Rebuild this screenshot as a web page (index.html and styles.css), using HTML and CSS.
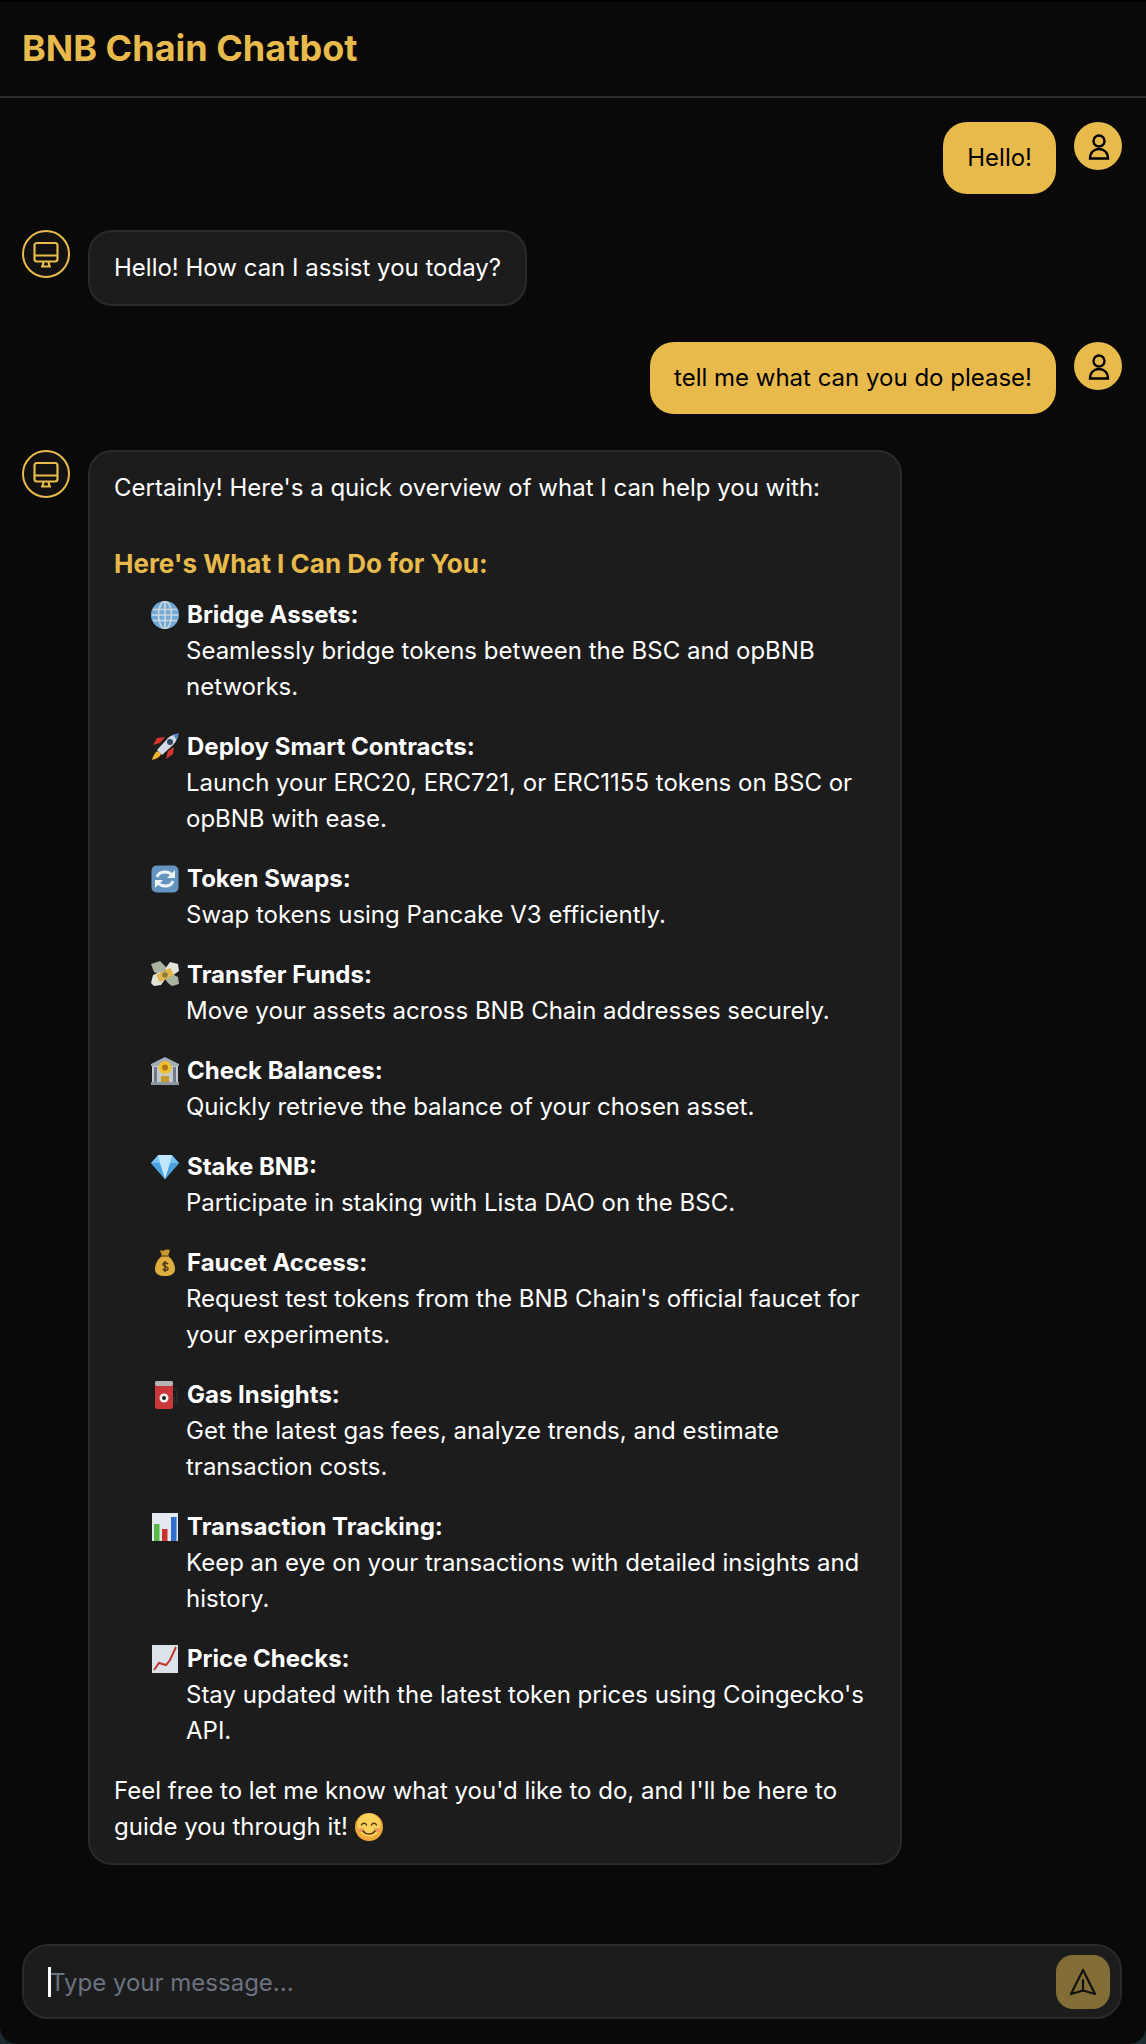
FILE: index.html
```html
<!DOCTYPE html>
<html lang="en">
<head>
  <meta charset="UTF-8" />
  <title>BNB Chain Chatbot</title>
  <link rel="stylesheet" href="styles.css">
</head>
<body>
  <div class="app">
    <header class="topbar">
      <h1>BNB Chain Chatbot</h1>
    </header>

    <main class="messages">
      <div class="msg msg-user">
        <div class="bubble bubble-user">Hello!</div>
        <div class="avatar avatar-user">
          <svg viewBox="0 0 48 48" width="48" height="48"><circle cx="25" cy="19" r="5.500"/><path d="M16 36.500c0-6 4-9.500 9-9.500s9 3.500 9 9.500z"/></svg>
        </div>
      </div>

      <div class="msg">
        <div class="avatar avatar-bot">
          <svg viewBox="0 0 44 44" width="44" height="44"><rect x="10.500" y="11" width="23" height="18.500" rx="2.500"/><path d="M10.500 23.500h23M19.500 29.500l-.8 4.500M24.500 29.500l.8 4.500M17 34.500h10"/></svg>
        </div>
        <div class="bubble bubble-bot">Hello! How can I assist you today?</div>
      </div>

      <div class="msg msg-user">
        <div class="bubble bubble-user">tell me what can you do please!</div>
        <div class="avatar avatar-user">
          <svg viewBox="0 0 48 48" width="48" height="48"><circle cx="25" cy="19" r="5.500"/><path d="M16 36.500c0-6 4-9.500 9-9.500s9 3.500 9 9.500z"/></svg>
        </div>
      </div>

      <div class="msg">
        <div class="avatar avatar-bot">
          <svg viewBox="0 0 44 44" width="44" height="44"><rect x="10.500" y="11" width="23" height="18.500" rx="2.500"/><path d="M10.500 23.500h23M19.500 29.500l-.8 4.500M24.500 29.500l.8 4.500M17 34.500h10"/></svg>
        </div>
        <div class="bubble bubble-bot bubble-long">
          <p class="intro">Certainly! Here's a quick overview of what I can help you with:</p>
          <h3>Here's What I Can Do for You:</h3>
          <ul class="features">
            <li>
              <svg class="emoji" viewBox="0 0 28 28"><circle cx="14" cy="14" r="14" fill="#6fa9d6"/><g fill="none" stroke="#cfd8dc" stroke-width="1.600"><ellipse cx="14" cy="14" rx="6.500" ry="13.500"/><path d="M14 1v26M2 8.500h24M2 19.500h24M1 14h26"/></g></svg><strong>Bridge Assets:</strong><br>
              Seamlessly bridge tokens between the BSC and opBNB networks.
            </li>
            <li>
              <svg class="emoji" viewBox="0 0 28 28"><path d="M9 10 2 12l4-7 8-1zM17 18l-2 8 7-5 1-7z" fill="#d9352b"/><path d="M7 18c-3 1-5 5-6 9 4-1 8-3 9-6z" fill="#f5b32e"/><path d="M6 17 17 5c3-2.500 7-4 10.500-4.500C27 4 25 9 22 12L11 22z" fill="#d3dce6"/><path d="M22 1.500C24 1 26 .8 27.500.5c-.3 2-1 4.500-2 6.500z" fill="#4a86c5"/><circle cx="19" cy="9" r="3" fill="#33465c"/></svg><strong>Deploy Smart Contracts:</strong><br>
              Launch your ERC20, ERC721, or ERC1155 tokens on BSC or opBNB with ease.
            </li>
            <li>
              <svg class="emoji" viewBox="0 0 28 28"><rect x=".5" y=".5" width="27" height="27" rx="5" fill="#6494c0"/><g fill="none" stroke="#f1f4f7" stroke-width="2.800"><path d="M6 12c1-3.500 4-5 8-5 3 0 5 1 6.500 2.500"/><path d="M22 16c-1 3.500-4 5-8 5-3 0-5-1-6.500-2.500"/></g><path d="M24 5v8h-8zM4 23v-8h8z" fill="#f1f4f7"/></svg><strong>Token Swaps:</strong><br>
              Swap tokens using Pancake V3 efficiently.
            </li>
            <li>
              <svg class="emoji" viewBox="0 0 28 28"><path d="M0 3l9-3 7 7-6 7-7-3zM14 18l5-6 8 4 1 7-7 2-4-3z" fill="#a9b39f"/><path d="M0 22l2-8 7-3 6 6-5 7-7 1zM14 8l5-7 8 2 1 7-7 5z" fill="#dfe3d8"/><rect x="6" y="10" width="16" height="8" rx="1" transform="rotate(-28 14 14)" fill="#e2b84d"/><circle cx="14" cy="14" r="2.800" fill="#8a7a3b"/></svg><strong>Transfer Funds:</strong><br>
              Move your assets across BNB Chain addresses securely.
            </li>
            <li>
              <svg class="emoji" viewBox="0 0 28 28"><path d="M14 0 28 7v2H0V7z" fill="#a3adb5"/><rect x="1" y="9" width="26" height="16" fill="#c3cbd1"/><g fill="#6f7b85"><rect x="3" y="10" width="3" height="15"/><rect x="22" y="10" width="3" height="15"/></g><rect x="10" y="19" width="8" height="6" fill="#c49a2d"/><rect x="0" y="25" width="28" height="3" fill="#8f99a1"/><circle cx="14" cy="10.500" r="6.500" fill="#f2bf2f"/><circle cx="14" cy="10.500" r="3" fill="#a8761a"/></svg><strong>Check Balances:</strong><br>
              Quickly retrieve the balance of your chosen asset.
            </li>
            <li>
              <svg class="emoji" viewBox="0 0 28 28"><path d="M7 2h14l7 8-14 16L0 10z" fill="#74c3f2"/><path d="M0 10h28L14 26z" fill="#4aa3e0"/><path d="M9 10h10l-5 16zM7 2l2 8h10l2-8z" fill="#bfe6fb"/></svg><strong>Stake BNB:</strong><br>
              Participate in staking with Lista DAO on the BSC.
            </li>
            <li>
              <svg class="emoji" viewBox="0 0 28 28"><path d="M9 1c2 1 3 1 5 0s4 0 5 0l-2 6h-6z" fill="#c9962f"/><path d="M11 7h6c4 3 7 8 7 13 0 5-4 7-10 7S4 25 4 20c0-5 3-10 7-13z" fill="#e0ae3f"/><rect x="10.500" y="6" width="7" height="2" fill="#8d6a1e"/><path d="M17 15c-1-1.500-5-2-5 .5 0 2.500 5 1.500 5 4s-4 2-5.500.5M14 12v11" fill="none" stroke="#4d3a14" stroke-width="1.500"/></svg><strong>Faucet Access:</strong><br>
              Request test tokens from the BNB Chain's official faucet for your experiments.
            </li>
            <li>
              <svg class="emoji" viewBox="0 0 28 28"><path d="M22 7c3 1 4 3 4 6v8c0 2-3 2-3 0v-5" fill="none" stroke="#2c2c2c" stroke-width="1.500"/><rect x="4" y="0" width="18" height="28" rx="2" fill="#c9393a"/><rect x="4" y="0" width="18" height="5" rx="2" fill="#b5b5b5"/><circle cx="13" cy="17" r="4.500" fill="#f2f2f2"/><circle cx="13" cy="17" r="2" fill="#222"/></svg><strong>Gas Insights:</strong><br>
              Get the latest gas fees, analyze trends, and estimate transaction costs.
            </li>
            <li>
              <svg class="emoji" viewBox="0 0 28 28"><rect x="1" y="0" width="26" height="28" fill="#e3e9ef"/><rect x="3" y="11" width="5.500" height="17" fill="#56b847"/><rect x="11" y="16" width="5.500" height="12" fill="#c8342a"/><rect x="20" y="4" width="5.500" height="24" fill="#2f6fcb"/></svg><strong>Transaction Tracking:</strong><br>
              Keep an eye on your transactions with detailed insights and history.
            </li>
            <li>
              <svg class="emoji" viewBox="0 0 28 28"><rect x="1" y="0" width="26" height="28" fill="#dbe2ea"/><path d="M3 25l5-7 7 2 4-5 6-13" fill="none" stroke="#c2352f" stroke-width="2"/></svg><strong>Price Checks:</strong><br>
              Stay updated with the latest token prices using Coingecko's API.
            </li>
          </ul>
          <p class="outro">Feel free to let me know what you'd like to do, and I'll be here to guide you through it! <svg class="emoji emoji-inline" viewBox="0 0 28 28"><circle cx="14" cy="14" r="14" fill="#f2a93a"/><circle cx="14" cy="12" r="11.500" fill="#fad25a"/><ellipse cx="6" cy="17" rx="3" ry="2" fill="#f19a63"/><ellipse cx="22" cy="17" rx="3" ry="2" fill="#f19a63"/><path d="M6.500 12c1-2.500 4-2.500 5 0M16.500 12c1-2.500 4-2.500 5 0M8 18c3 4 9 4 12 0" fill="none" stroke="#5b3a12" stroke-width="1.500" stroke-linecap="round"/></svg></p>
        </div>
      </div>
    </main>

    <form class="composer">
      <span class="caret"></span>
      <input type="text" class="composer-input" placeholder="Type your message...">
      <button type="button" class="send-btn">
        <svg viewBox="0 0 28 28" width="28" height="28"><path d="M14 2 26 26 14 22.500 2 26z"/><path d="M14 22.500V12"/></svg>
      </button>
    </form>
  </div>
</body>
</html>
```

FILE: styles.css
```css
* {
  box-sizing: border-box;
}

body {
  margin: 0;
  background-color: #1b2a2c;
  color: #ffffff;
  font-family: "Inter", "Liberation Sans", sans-serif;
  font-size: 24px;
  line-height: 36px;
}

.app {
  height: 2044px;
  display: flex;
  flex-direction: column;
  background-color: #090909;
  border-top: 2px solid #000;
  border-radius: 0 0 17px 17px;
  overflow: hidden;
}

.topbar {
  height: 96px;
  flex-shrink: 0;
  display: flex;
  align-items: center;
  padding: 0 22px 3px;
  border-bottom: 2px solid #2b2b2b;
}

.topbar h1 {
  margin: 0;
  font-size: 36px;
  font-weight: 700;
  color: #e8ba4c;
}

.messages {
  flex: 1;
  display: flex;
  flex-direction: column;
  gap: 36px;
  padding: 24px 24px 0 22px;
}

.msg {
  display: flex;
  align-items: flex-start;
  gap: 18px;
}

.msg-user {
  justify-content: flex-end;
}

.bubble {
  border-radius: 24px;
  padding: 18px 24px;
}

.bubble-user {
  background-color: #e8ba4c;
  color: #000;
}

.bubble-bot {
  background-color: #1c1c1c;
  border: 2px solid #2a2a2a;
  padding: 18px 24px;
}

.bubble-long {
  width: 814px;
}

.avatar {
  width: 48px;
  height: 48px;
  border-radius: 50%;
  flex-shrink: 0;
  display: flex;
  align-items: center;
  justify-content: center;
}

.avatar svg {
  fill: none;
}

.avatar-user {
  background-color: #e8ba4c;
}

.avatar-user svg {
  stroke: #000;
  stroke-width: 2.400;
}

.avatar-bot {
  background-color: #111;
  border: 2px solid #e8ba4c;
}

.avatar-bot svg {
  stroke: #e8ba4c;
  stroke-width: 2.200;
}

.intro,
.outro {
  margin: 0;
}

.bubble-long h3 {
  margin: 40px 0 15px;
  font-size: 26px;
  line-height: 36px;
  font-weight: 700;
  color: #e8ba4c;
}

.features {
  list-style: none;
  margin: 0 0 24px;
  padding: 0 0 0 72px;
}

.features li + li {
  margin-top: 24px;
}

.features strong {
  font-weight: 700;
}

.emoji {
  display: inline-block;
  width: 28px;
  height: 28px;
  vertical-align: -6px;
  margin: 0 8px 0 -35px;
}

.emoji-inline {
  margin: 0;
}

.composer {
  position: relative;
  flex-shrink: 0;
  display: flex;
  align-items: center;
  gap: 12px;
  height: 75px;
  margin: 0 24px 25px 22px;
  padding: 0 10px 0 26px;
  background-color: #1c1c1c;
  border: 2px solid #2a2a2a;
  border-radius: 26px;
}

.composer-input {
  flex: 1;
  min-width: 0;
  height: 38px;
  border: none;
  outline: none;
  background: transparent;
  color: #fff;
  font: inherit;
  padding: 2px 0 0;
}

.composer-input::placeholder {
  color: #6b7280;
  opacity: 1;
}

.caret {
  position: absolute;
  left: 24px;
  top: 21px;
  width: 3px;
  height: 30px;
  background-color: #fff;
}

.send-btn {
  width: 54px;
  height: 54px;
  flex-shrink: 0;
  display: flex;
  align-items: center;
  justify-content: center;
  padding: 0;
  border: none;
  border-radius: 17px;
  background-color: #836d37;
}

.send-btn svg {
  fill: none;
  stroke: #111;
  stroke-width: 2.200;
  stroke-linejoin: round;
  stroke-linecap: round;
}
```
